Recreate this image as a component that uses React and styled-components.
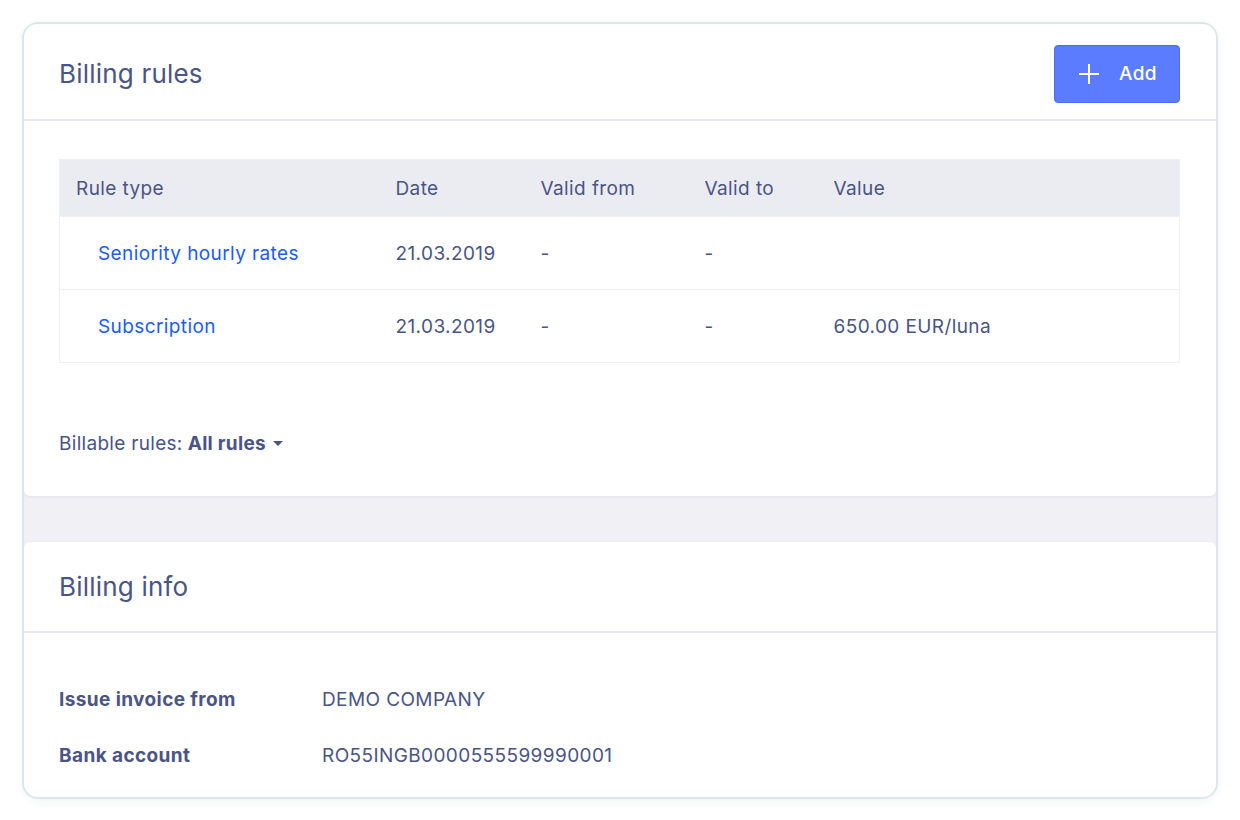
import React from "react";
import styled, { createGlobalStyle } from "styled-components";

const GlobalStyle = createGlobalStyle`
  body {
    margin: 0;
    background: #ffffff;
    font-family: "Inter", "Noto Sans", sans-serif;
    color: #4a5485;
  }
`;

const Page = styled.div`
  padding: 22px 22px 20px 22px;
`;

const Frame = styled.div`
  border: 2px solid #dde7eb;
  border-radius: 16px;
  background: #f0f0f5;
  overflow: hidden;
  box-shadow: 0 2px 8px rgba(40, 60, 80, 0.06);
  display: flex;
  flex-direction: column;
  gap: 46px;
`;

const Panel = styled.section`
  background: #ffffff;
  border-radius: 6px;
  box-shadow: 0 1px 3px rgba(60, 70, 110, 0.08);
`;

const PanelHeader = styled.header`
  height: ${(p) => p.$height}px;
  box-sizing: border-box;
  display: flex;
  align-items: center;
  justify-content: space-between;
  padding: ${(p) => p.$shift || 0}px 36px 0 35px;
  border-bottom: 2px solid #e8eaf1;
`;

const Title = styled.h2`
  margin: 0;
  font-size: 26px;
  font-weight: 400;
  color: #4a5485;
  letter-spacing: 0.2px;
`;

const AddButton = styled.button`
  display: flex;
  align-items: center;
  gap: 18px;
  height: 58px;
  width: 126px;
  padding: 0 0 0 22px;
  box-sizing: border-box;
  background: #5b7cff;
  border: 1px solid #4c6cf2;
  border-radius: 4px;
  color: #ffffff;
  font-family: inherit;
  font-size: 19px;
  font-weight: 500;
  letter-spacing: 0.4px;
  cursor: pointer;
`;

const PanelBody = styled.div`
  padding: ${(p) => p.$pad};
`;

const Table = styled.table`
  width: 100%;
  table-layout: fixed;
  border-collapse: collapse;
  border: 1px solid #eef0f4;
  font-size: 19px;
  letter-spacing: 0.4px;
`;

const HeadCell = styled.th`
  box-sizing: border-box;
  background: #ebecf2;
  height: 57px;
  padding: 0 16px;
  text-align: left;
  font-weight: 400;
  color: #4a5485;
  width: ${(p) => p.$w || "auto"};
`;

const Row = styled.tr`
  border-top: 1px solid #eef0f4;
`;

const Cell = styled.td`
  height: 72px;
  padding: 0 16px;
  color: #4a5485;
`;

const LinkCell = styled(Cell)`
  padding-left: 38px;
`;

const RuleLink = styled.a`
  color: #1a5cff;
  text-decoration: none;
`;

const Billable = styled.div`
  margin-top: 69px;
  font-size: 19px;
  letter-spacing: 0.3px;
  display: flex;
  align-items: center;
  gap: 5px;
`;

const Dropdown = styled.span`
  display: inline-flex;
  align-items: center;
  gap: 7px;
  font-weight: 700;
`;

const Caret = styled.span`
  width: 0;
  height: 0;
  border-left: 5px solid transparent;
  border-right: 5px solid transparent;
  border-top: 5px solid #4a5485;
`;

const InfoGrid = styled.div`
  display: grid;
  grid-template-columns: 263px 1fr;
  row-gap: 33px;
  font-size: 19px;
  letter-spacing: 0.4px;
`;

const InfoLabel = styled.div`
  font-weight: 700;
`;

const InfoValue = styled.div`
  font-weight: 400;
`;

const rules = [
  { type: "Seniority hourly rates", date: "21.03.2019", from: "-", to: "-", value: "" },
  { type: "Subscription", date: "21.03.2019", from: "-", to: "-", value: "650.00 EUR/luna" },
];

const PlusIcon = () => (
  <svg width="24" height="24" viewBox="0 0 24 24" fill="none" stroke="#ffffff" strokeWidth="2">
    <path d="M12 2v20M2 12h20" />
  </svg>
);

const App = () => {
  return (
    <Page>
      <GlobalStyle />
      <Frame>
        <Panel>
          <PanelHeader $height={97} $shift={4}>
            <Title>Billing rules</Title>
            <AddButton>
              <PlusIcon />
              Add
            </AddButton>
          </PanelHeader>
          <PanelBody $pad="38px 36px 41px 35px">
            <Table>
              <thead>
                <tr>
                  <HeadCell $w="320px">Rule type</HeadCell>
                  <HeadCell $w="145px">Date</HeadCell>
                  <HeadCell $w="164px">Valid from</HeadCell>
                  <HeadCell $w="129px">Valid to</HeadCell>
                  <HeadCell>Value</HeadCell>
                </tr>
              </thead>
              <tbody>
                {rules.map((r) => (
                  <Row key={r.type}>
                    <LinkCell>
                      <RuleLink href="#">{r.type}</RuleLink>
                    </LinkCell>
                    <Cell>{r.date}</Cell>
                    <Cell>{r.from}</Cell>
                    <Cell>{r.to}</Cell>
                    <Cell>{r.value}</Cell>
                  </Row>
                ))}
              </tbody>
            </Table>
            <Billable>
              Billable rules:
              <Dropdown>
                All rules
                <Caret />
              </Dropdown>
            </Billable>
          </PanelBody>
        </Panel>
        <Panel>
          <PanelHeader $height={91}>
            <Title>Billing info</Title>
          </PanelHeader>
          <PanelBody $pad="55px 36px 30px 35px">
            <InfoGrid>
              <InfoLabel>Issue invoice from</InfoLabel>
              <InfoValue>DEMO COMPANY</InfoValue>
              <InfoLabel>Bank account</InfoLabel>
              <InfoValue>RO55INGB0000555599990001</InfoValue>
            </InfoGrid>
          </PanelBody>
        </Panel>
      </Frame>
    </Page>
  );
};

export default App;
